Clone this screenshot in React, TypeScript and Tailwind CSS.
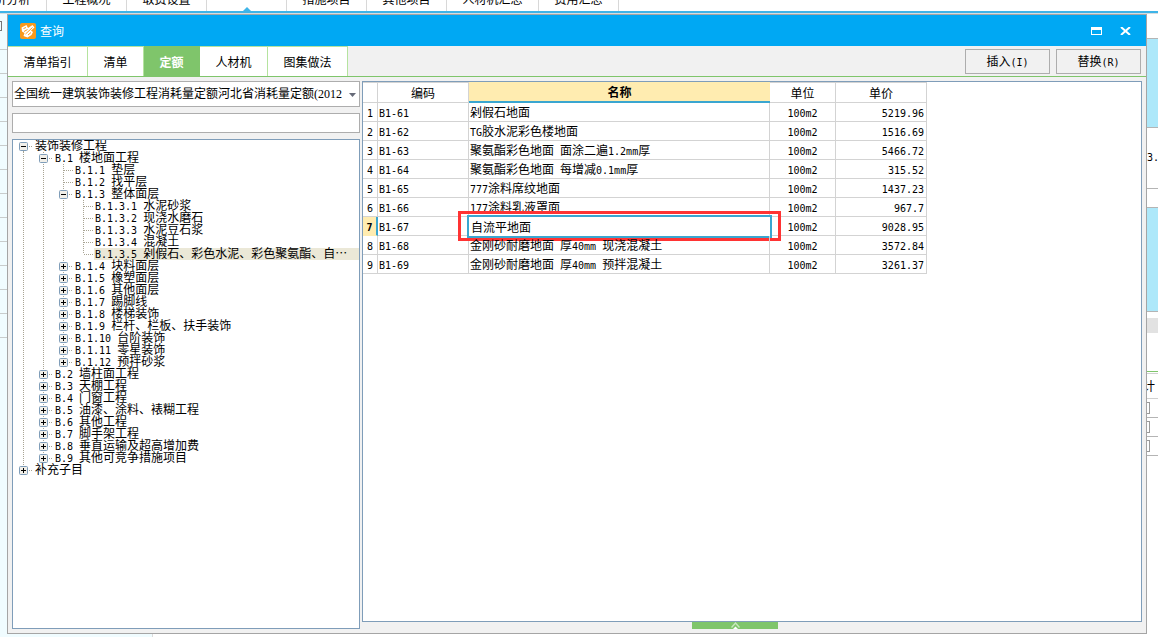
import React, { useState } from 'react'

interface TreeNode {
  label: string
  open?: boolean
  selected?: boolean
  children?: TreeNode[]
}

interface QuotaRow {
  code: string
  name: string
  price: string
}

const TREE: TreeNode[] = [
  {
    label: '装饰装修工程',
    open: true,
    children: [
      {
        label: 'B.1 楼地面工程',
        open: true,
        children: [
          { label: 'B.1.1 垫层' },
          { label: 'B.1.2 找平层' },
          {
            label: 'B.1.3 整体面层',
            open: true,
            children: [
              { label: 'B.1.3.1 水泥砂浆' },
              { label: 'B.1.3.2 现浇水磨石' },
              { label: 'B.1.3.3 水泥豆石浆' },
              { label: 'B.1.3.4 混凝土' },
              { label: 'B.1.3.5 剁假石、彩色水泥、彩色聚氨酯、自⋯', selected: true },
            ],
          },
          { label: 'B.1.4 块料面层', children: [] },
          { label: 'B.1.5 橡塑面层', children: [] },
          { label: 'B.1.6 其他面层', children: [] },
          { label: 'B.1.7 踢脚线', children: [] },
          { label: 'B.1.8 楼梯装饰', children: [] },
          { label: 'B.1.9 栏杆、栏板、扶手装饰', children: [] },
          { label: 'B.1.10 台阶装饰', children: [] },
          { label: 'B.1.11 零星装饰', children: [] },
          { label: 'B.1.12 预拌砂浆', children: [] },
        ],
      },
      { label: 'B.2 墙柱面工程', children: [] },
      { label: 'B.3 天棚工程', children: [] },
      { label: 'B.4 门窗工程', children: [] },
      { label: 'B.5 油漆、涂料、裱糊工程', children: [] },
      { label: 'B.6 其他工程', children: [] },
      { label: 'B.7 脚手架工程', children: [] },
      { label: 'B.8 垂直运输及超高增加费', children: [] },
      { label: 'B.9 其他可竞争措施项目', children: [] },
    ],
  },
  { label: '补充子目', children: [] },
]

const ROWS: QuotaRow[] = [
  { code: 'B1-61', name: '剁假石地面', price: '5219.96' },
  { code: 'B1-62', name: 'TG胶水泥彩色楼地面', price: '1516.69' },
  { code: 'B1-63', name: '聚氨酯彩色地面 面涂二遍1.2mm厚', price: '5466.72' },
  { code: 'B1-64', name: '聚氨酯彩色地面 每增减0.1mm厚', price: '315.52' },
  { code: 'B1-65', name: '777涂料席纹地面', price: '1437.23' },
  { code: 'B1-66', name: '177涂料乳液罩面', price: '967.7' },
  { code: 'B1-67', name: '自流平地面', price: '9028.95' },
  { code: 'B1-68', name: '金刚砂耐磨地面 厚40mm 现浇混凝土', price: '3572.84' },
  { code: 'B1-69', name: '金刚砂耐磨地面 厚40mm 预拌混凝土', price: '3261.37' },
]

const ACTIVE_ROW = 6

const TABS = [
  { label: '清单指引', width: 'w-20' },
  { label: '清单', width: 'w-14' },
  { label: '定额', width: 'w-14' },
  { label: '人材机', width: 'w-[68px]' },
  { label: '图集做法', width: 'w-20' },
]

const MAIN_TABS = [
  { label: '造价分析', width: 'w-20' },
  { label: '工程概况', width: 'w-20' },
  { label: '取费设置', width: 'w-20' },
  { label: '', width: 'w-20' },
  { label: '措施项目', width: 'w-20' },
  { label: '其他项目', width: 'w-20' },
  { label: '人材机汇总', width: 'w-[92px]' },
  { label: '费用汇总', width: 'w-20' },
]

// Latin runs go in a half-width mono face so they line up with the 12px hanzi grid
const Txt: React.FC<{ children: string }> = ({ children }) => (
  <>
    {children.split(/([\x20-\x7e]+)/).map((run, i) =>
      i % 2 ? (
        <span key={i} className="font-['DejaVu_Sans_Mono',monospace] text-[10px] leading-none whitespace-pre">{run}</span>
      ) : (
        run
      ),
    )}
  </>
)

const Guide: React.FC<{ vertical?: 'full' | 'half'; across?: boolean }> = ({ vertical, across }) => (
  <svg viewBox="0 0 20 12" className="block w-5 h-3 shrink-0" stroke="#a8a494" strokeDasharray="1 1" fill="none">
    {vertical && <path d={vertical === 'full' ? 'M9.5 0V12' : 'M9.5 0V6'} />}
    {across && <path d="M10 6.5H19" />}
  </svg>
)

const Branch: React.FC<{ node: TreeNode; guides: boolean[]; last: boolean }> = ({ node, guides, last }) => {
  const [open, setOpen] = useState(!!node.open)
  const depth = guides.length
  return (
    <li role="treeitem" aria-expanded={node.children ? open : undefined} aria-selected={!!node.selected}>
      <div className="flex h-3">
        {guides.map((line, i) => (
          <Guide key={i} vertical={line ? 'full' : undefined} />
        ))}
        {node.children ? (
          <button
            type="button"
            aria-label={node.label}
            onClick={() => setOpen(!open)}
            className="block w-5 h-3 shrink-0"
          >
            <svg viewBox="0 0 20 12" className="block w-5 h-3" fill="none">
              <path d={depth === 0 && open ? 'M9.5 11V12' : last ? 'M9.5 0V2' : 'M9.5 0V12'} stroke="#a8a494" strokeDasharray="1 1" />
              <path d="M15 6.5H19" stroke="#a8a494" strokeDasharray="1 1" />
              <rect x="5.5" y="2.5" width="8" height="8" rx="1" fill="#f1efe9" stroke="#7f9db9" />
              <path d={open ? 'M7 6.5H12' : 'M7 6.5H12M9.5 4V9'} stroke="#000" />
            </svg>
          </button>
        ) : (
          <Guide vertical={last ? 'half' : 'full'} across />
        )}
        <span className={`flex-1 pl-px leading-[10px] whitespace-nowrap ${node.selected ? 'bg-[#ebe8d7]' : ''}`}>
          <Txt>{node.label}</Txt>
        </span>
      </div>
      {open && node.children && node.children.length > 0 && (
        <ul role="group">
          {node.children.map((child, i) => (
            <Branch
              key={child.label}
              node={child}
              guides={[...guides, !last]}
              last={i === node.children!.length - 1}
            />
          ))}
        </ul>
      )}
    </li>
  )
}

const MainWindow: React.FC = () => (
  <div className="h-full flex flex-col bg-white">
    <div className="h-[11px] shrink-0 overflow-hidden">
      <div className="flex h-[25px] -mt-[14px] -ml-[33px]">
        {MAIN_TABS.map((tab, i) => (
          <div key={i} className={`${tab.width} flex items-center justify-center border-r border-[#d8d8d8] relative`}>
            <span className="leading-6">{tab.label}</span>
            {!tab.label && (
              <svg viewBox="0 0 8 4" className="absolute bottom-0 left-9 w-2 h-1">
                <path d="M0 4L4 0L8 4Z" fill="#3eb4e8" />
              </svg>
            )}
          </div>
        ))}
      </div>
    </div>
    <div className="h-[3px] shrink-0 bg-[#d5dde0] border-t-2 border-[#3eb4e8]" />
    <div className="flex-1 min-h-0 flex justify-between">
      <div className="w-[153px] bg-[#f0fcff] border-r border-[#dcdcdc]">
        <div className="h-9 border-b border-[#c8cccc] pt-[7px]">
          <div className="w-0.5 h-2.5 border-y border-r border-[#777]" />
        </div>
        {Array.from({ length: 12 }, (_, i) => (
          <div key={i} className="h-6 border-b border-[#c8cccc]" />
        ))}
      </div>
      <div className="w-[11px] overflow-hidden">
        <div className="h-[25px] border-b border-[#b4b4b4]" />
        <div className="h-[89px] border-b border-[#b4b4b4] bg-[#ade8fa]" />
        <div className="h-[61px] border-b border-[#b4b4b4] flex items-center"><Txt>3.</Txt></div>
        <div className="h-[19px] border-b border-[#b4b4b4]" />
        <div className="h-[104px] border-b border-[#b4b4b4] bg-[#ade8fa]" />
        <div className="h-[6px]" />
        <div className="h-[15px] bg-[#e2e2e2]" />
        <div className="h-[39px] border-b border-[#7fc56b]" />
        <div className="h-[2px] border-b border-[#d0d0d0]" />
        <div className="h-[25px] border-b border-[#d0d0d0] flex items-center"><span className="-ml-1">计</span></div>
        {[0, 1, 2].map((i) => (
          <div key={i} className="h-[19px] border-b border-[#b4b4b4] pt-[3px]">
            <div className="w-[3px] h-3 border-y border-r border-[#999]" />
          </div>
        ))}
      </div>
    </div>
  </div>
)

const TitleBar: React.FC = () => (
  <header className="h-[31px] shrink-0 bg-[#00a8f3] flex items-center pl-3 pr-[15px] text-white">
    <svg viewBox="0 0 16 16" className="w-4 h-4 mr-1">
      <rect width="16" height="16" rx="2" fill="#f89a1c" />
      <path d="M1.5 4.5L6.5 2L8 5L12.5 2L14.5 4.5L11 7.5L13 9L11.5 12L7.5 14.5L3.5 13L4.5 10L2 8.5Z" fill="#fff" />
      <path d="M3.5 5.5L6 4.5M4 8.5L7.5 6.5M5.5 11L12.5 4.5M8 12L11 9.5" stroke="#f89a1c" strokeWidth="1" fill="none" />
    </svg>
    <h1 className="flex-1 leading-4">查询</h1>
    <button type="button" aria-label="还原" className="mr-[18px]">
      <svg viewBox="0 0 11 8" className="block w-[11px] h-2">
        <rect x="0.5" y="0.5" width="10" height="7" fill="none" stroke="#fff" />
        <path d="M0 1.5H11" stroke="#fff" strokeWidth="3" />
      </svg>
    </button>
    <button type="button" aria-label="关闭">
      <svg viewBox="0 0 11 8" className="block w-[11px] h-2">
        <path d="M1 0L10 8M10 0L1 8" stroke="#fff" strokeWidth="2" />
      </svg>
    </button>
  </header>
)

const TabRow: React.FC = () => {
  const [active, setActive] = useState('定额')
  return (
    <div className="h-[31px] shrink-0 flex items-center justify-between border-b border-[#7fc56b] pr-[5px]">
      <div role="tablist" className="flex h-full">
        {TABS.map((tab) => (
          <button
            key={tab.label}
            type="button"
            role="tab"
            aria-selected={tab.label === active}
            onClick={() => setActive(tab.label)}
            className={`${tab.width} border-t border-r ${
              tab.label === active ? 'bg-[#7fc56b] border-[#7fc56b] text-white font-bold' : 'bg-white border-[#b5e39f]'
            }`}
          >
            {tab.label}
          </button>
        ))}
      </div>
      <div className="flex gap-1.5">
        <button type="button" className="w-[85px] h-[25px] border border-[#adadad]"><Txt>插入(I)</Txt></button>
        <button type="button" className="w-[85px] h-[25px] border border-[#adadad]"><Txt>替换(R)</Txt></button>
      </div>
    </div>
  )
}

const QuotaTable: React.FC = () => (
  <table className="w-[564px] table-fixed border-separate border-spacing-0">
    <colgroup>
      <col className="w-[15px]" />
      <col className="w-[91px]" />
      <col className="w-[301px]" />
      <col className="w-[66px]" />
      <col className="w-[91px]" />
    </colgroup>
    <thead>
      <tr className="h-[21px] leading-4">
        <th className="border-t border-r border-b border-[#d3d3d3] p-0" />
        <th className="border-t border-r border-b border-[#d3d3d3] p-0 font-normal">编码</th>
        <th className="border-b-2 border-[#3aa6d0] bg-[#ffecb0] p-0 font-bold">名称</th>
        <th className="border-t border-r border-b border-[#d3d3d3] p-0 font-normal">单位</th>
        <th className="border-t border-r border-b border-[#d3d3d3] p-0 font-normal">单价</th>
      </tr>
    </thead>
    <tbody>
      {ROWS.map((row, i) => (
        <tr key={row.code} className="h-[19px] leading-4">
          <td
            className={
              i === ACTIVE_ROW
                ? 'border-r-2 border-r-[#3aa6d0] border-b border-b-[#ffecb0] bg-[#ffecb0] p-0 text-center font-bold'
                : 'border-r border-b border-[#d3d3d3] p-0 text-center'
            }
          >
            <Txt>{String(i + 1)}</Txt>
          </td>
          <td className="border-r border-b border-[#d3d3d3] py-0 pl-px pr-0"><Txt>{row.code}</Txt></td>
          <td className="relative border-r border-b border-[#d3d3d3] py-0 pl-px pr-0 whitespace-nowrap">
            {i === ACTIVE_ROW ? (
              <>
                <input
                  aria-label="名称"
                  defaultValue={row.name}
                  className="absolute -left-0.5 -right-[3px] -top-0.5 -bottom-[3px] border-2 border-[#3aa6d0] bg-white pl-0.5 outline-none"
                />
                <div className="absolute -left-[11px] -right-3 -top-1.5 -bottom-1.5 border-3 border-[#ff3333] pointer-events-none" />
              </>
            ) : (
              <Txt>{row.name}</Txt>
            )}
          </td>
          <td className="border-r border-b border-[#d3d3d3] p-0 text-center"><Txt>100m2</Txt></td>
          <td className="border-r border-b border-[#d3d3d3] py-0 pl-0 pr-0.5 text-right"><Txt>{row.price}</Txt></td>
        </tr>
      ))}
    </tbody>
  </table>
)

export default function App() {
  return (
    <div className="relative h-screen overflow-hidden text-xs text-black font-['Noto_Sans_CJK_SC',sans-serif]">
      <MainWindow />
      <section
        aria-label="查询"
        className="absolute left-[7px] right-[11px] top-[14px] bottom-[3px] flex flex-col border border-[#a5a5a5] bg-[#f1f1f1]"
      >
        <TitleBar />
        <TabRow />
        <div className="flex-1 min-h-0 flex gap-0.5 p-1">
          <aside className="w-[348px] shrink-0 flex flex-col gap-1.5">
            <div className="relative">
              <select
                aria-label="定额库"
                className="block w-full h-[26px] appearance-none border border-[#adadad] bg-white pl-px pr-[17px] font-['Liberation_Serif','Noto_Sans_CJK_SC',serif]"
              >
                <option>全国统一建筑装饰装修工程消耗量定额河北省消耗量定额(2012)</option>
              </select>
              <svg viewBox="0 0 7 4" className="absolute right-1 top-3 w-[7px] h-1 pointer-events-none">
                <path d="M0 0H7L3.5 4Z" fill="#666a78" />
              </svg>
            </div>
            <input aria-label="搜索" className="block w-full h-5 border border-[#adadad] bg-white px-1 outline-none" />
            <ul role="tree" className="flex-1 min-h-0 overflow-hidden border border-[#7f9db9] bg-white pl-px">
              {TREE.map((node, i) => (
                <Branch key={node.label} node={node} guides={[]} last={i === TREE.length - 1} />
              ))}
            </ul>
          </aside>
          <main className="flex-1 min-w-0 flex flex-col">
            <div className="flex-1 min-h-0 border border-[#7f9db9] bg-white">
              <QuotaTable />
            </div>
            <div className="flex justify-center pr-[34px]">
              <button
                type="button"
                aria-label="展开"
                className="w-[86px] h-[7px] bg-[#7fc56b] flex items-center justify-center"
              >
                <svg viewBox="0 0 9 7" className="block w-[9px] h-[7px]" fill="none">
                  <path d="M0.5 5.5L4.5 1L8.5 5.5" stroke="#c9e8bf" strokeWidth="1.4" />
                  <path d="M2 7L4.5 4.5L7 7Z" fill="#fff" />
                </svg>
              </button>
            </div>
          </main>
        </div>
      </section>
    </div>
  )
}
